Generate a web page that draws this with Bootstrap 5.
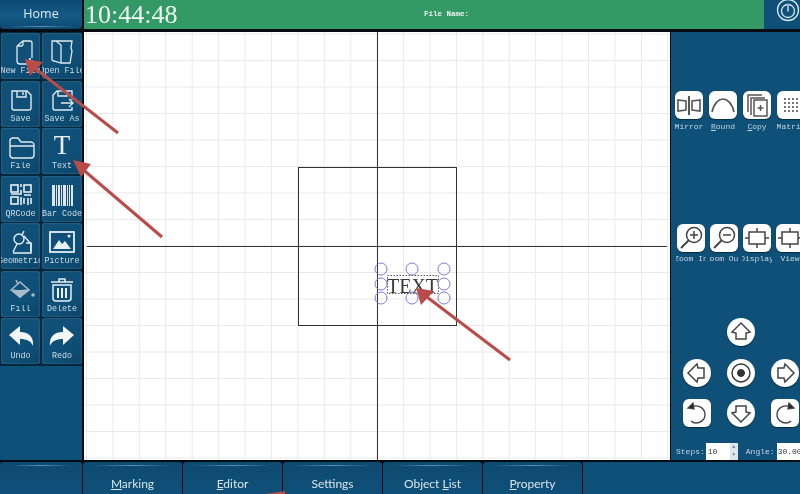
<!DOCTYPE html>
<html lang="en">
<head>
<meta charset="utf-8">
<title>Laser marking editor</title>
<link href="https://cdn.jsdelivr.net/npm/bootstrap@5.3.0/dist/css/bootstrap.min.css" rel="stylesheet">
<style>
html,body{width:800px;height:494px;overflow:hidden;background:#000;margin:0}
.shell{position:relative;width:800px;height:494px;background:#020c12;filter:blur(.35px)}
.toprow{height:29px;margin-bottom:3px}
.homebtn{width:82px;margin-right:2px;border-radius:0 0 4px 4px;background:linear-gradient(#0c4a72,#135a86 55%,#0d4a70);--bs-btn-color:#dfeaf0;--bs-btn-hover-color:#dfeaf0;--bs-btn-hover-bg:#135a86;--bs-btn-font-size:12.5px;--bs-btn-font-family:"Open Sans",sans-serif;position:relative;padding-bottom:3px}
.homebtn::after{content:"";position:absolute;left:8px;right:8px;bottom:2px;height:1px;background:linear-gradient(90deg,transparent,#5d93b3,transparent)}
.greenbar{width:680px;background:#339966;color:#eef7f2}
.clock{font:26px/28px "Liberation Serif",serif;margin-left:1px;width:93px}
.fname{font:bold 7.5px "Liberation Mono",monospace;margin-left:246px;margin-top:-1px}
.powerbox{width:36px;background:#0f5078;overflow:hidden}
.midrow{height:428px;margin-bottom:2px}
.leftpane{width:82px;margin-right:2px;background:#0f5078}
.toolgrid{display:grid;grid-template-columns:39px 40px;column-gap:2px;row-gap:1.5px;padding:1px 0 2px 1px;background:#06283d}
.toolbtn{height:46px;padding:0;border:0;border-radius:3px;background:linear-gradient(145deg,#114f76,#0f5078 60%,#0c4567);box-shadow:inset 0 0 2px #4a87a8;display:flex;flex-direction:column;align-items:center;justify-content:space-between;overflow:hidden;--bs-btn-hover-bg:#0f5078}
.toolbtn svg{display:block;margin-top:4px;flex:none}
.ttl{font:8.4px/9px "Liberation Mono",monospace;white-space:nowrap;margin-bottom:3px;color:#cfdde6;display:flex;justify-content:center;width:100%;overflow:hidden}
.ttglyph{font:27px/28px "Liberation Serif",serif;color:#e8f0f4;margin-top:3px}
.canvasbox{width:586px;margin-right:1px;position:relative;background-color:#fff;background-image:linear-gradient(#e9e9e9 1px,transparent 1px),linear-gradient(90deg,#e9e9e9 1px,transparent 1px);background-size:26.43px 26.5px;background-position:2px 1.5px;overflow:hidden}
.overlayart{position:absolute;left:0;top:0}
.textnode{font:22px "Liberation Serif",serif;fill:#3a3a3a}
.rightpane{width:129px;background:#0f5078;overflow:hidden}
.iconrow{display:flex}
.r1{margin:59px 0 0 4px;gap:6px}
.r2{margin-top:92px;margin-left:6px;gap:5px}
.icell{flex:none;width:28px;display:flex;flex-direction:column;align-items:center}
.whitebtn{width:28px;height:28px;padding:0;border:0;border-radius:6px;background:#fff;box-shadow:0 1px 1px #062c44;display:block;flex:none;--bs-btn-hover-bg:#fff}
.whitebtn svg{display:block}
.ilabel{font:8px/10px "Liberation Mono",monospace;color:#c4d6e1;margin-top:2px;width:30px;display:flex;justify-content:center;overflow:hidden;white-space:nowrap}
.r1 .ilabel{margin-top:3px}
.dpad{display:grid;grid-template-columns:repeat(3,28px);column-gap:16px;grid-auto-rows:28px;row-gap:12.5px;margin:54px 0 0 12px}
.roundbtn{border-radius:50%}
.steprow{margin:16px 0 0 5px;font:8px "Liberation Mono",monospace;color:#c4d6e1;height:17px}
.spinfake{flex:none;background:#fff;color:#333;font:8px/17px "Liberation Mono",monospace;height:17px;display:flex;justify-content:space-between}
.spin1{width:32px;margin:0 1px 0 1px;padding-left:2px}
.stepgap{margin-left:7px}
.spin2{width:40px;margin-left:2px;padding-left:1px}
.arrows{display:flex;flex-direction:column;width:8px;background:#dfe6ec;color:#6c8aa8;font-size:5px;line-height:8px;text-align:center}
.tabrow{height:32px;gap:1px}
.tabcell{width:99px;height:32px;background:linear-gradient(#0d4a70,#0f5078);--bs-btn-color:#d8e5ec;--bs-btn-hover-color:#d8e5ec;--bs-btn-font-size:12px;--bs-btn-font-family:Lato,sans-serif;border-radius:3px 3px 0 0;position:relative;padding:12px 0 0;text-align:center;border:0;--bs-btn-hover-bg:#0f5078}
.tabcell::before{content:"";position:absolute;left:10px;right:10px;top:3px;height:1px;background:linear-gradient(90deg,transparent,#5d93b3,transparent)}
.tabfirst{width:82px}
.tabrest{flex:1;border-radius:0;background:#0f5078}
.tabrest::before{display:none}
.markup{position:absolute;left:0;top:0;pointer-events:none}
</style>
</head>
<body>
<div class="shell">
  <div class="toprow d-flex">
    <button class="homebtn btn border-0 p-0">Home</button>
    <div class="greenbar d-flex align-items-center">
      <div class="clock">10:44:48</div>
      <div class="fname">File Name:</div>
    </div>
    <div class="powerbox">
      <svg width="36" height="29" viewBox="0 0 36 29" fill="none" stroke="#d5e6ef"><circle cx="24" cy="10" r="10.5" stroke-width="1.3"/><circle cx="24" cy="11" r="6.5" stroke-width="1.3"/><path d="M24 3v9" stroke-width="2" stroke="#0f5078"/><path d="M24 3.5v8" stroke-width="1.4"/></svg>
    </div>
  </div>

  <div class="midrow d-flex">
    <div class="leftpane">
      <div class="toolgrid">
        <button class="toolbtn btn"><svg width="30" height="30" viewBox="0 0 30 30" fill="none" stroke="#dfeaf0" stroke-width="1.3"><path d="M11 9l6-5h7c1 0 2 1 2 2v15M11 9v15c0 2 1 3 3 3h7M11 9h4c1 0 2-1 2-2V4"/><path d="M24 21v6M21 24h6" stroke="#fff" stroke-width="1.6"/></svg><span class="ttl">New File</span></button>
        <button class="toolbtn btn"><svg width="30" height="30" viewBox="0 0 30 30" fill="none" stroke="#dfeaf0" stroke-width="1.3"><path d="M5 4h20l-1 7 1 3-2 12h-9l-7-2c-1 0-2-1-2-2z"/><path d="M9 4l5 4v18"/></svg><span class="ttl">Open File</span></button>
        <button class="toolbtn btn"><svg width="30" height="30" viewBox="0 0 30 30" fill="none" stroke="#dfeaf0" stroke-width="1.4"><path d="M6 6h15l4 4v13c0 1-1 2-2 2H8c-1 0-2-1-2-2z"/><path d="M11 6v6h9V6M17 7v3"/></svg><span class="ttl">Save</span></button>
        <button class="toolbtn btn"><svg width="30" height="30" viewBox="0 0 30 30" fill="none" stroke="#dfeaf0" stroke-width="1.4"><path d="M25 15V6H10L6 10v13c0 1 1 2 2 2h17v-3"/><path d="M11 6v5h9V6M14 18h12M22 14l4 4-4 4"/></svg><span class="ttl">Save As</span></button>
        <button class="toolbtn btn"><svg width="30" height="30" viewBox="0 0 30 30" fill="none" stroke="#dfeaf0" stroke-width="1.4"><path d="M4 9c0-2 1-3 3-3h5l3 4h10c1 0 3 1 3 3v10c0 2-1 3-3 3H7c-2 0-3-1-3-3z"/><path d="M4 14h24"/></svg><span class="ttl">File</span></button>
        <button class="toolbtn btn"><span class="ttglyph">T</span><span class="ttl">Text</span></button>
        <button class="toolbtn btn"><svg width="30" height="30" viewBox="0 0 30 30" fill="none" stroke="#e6eff4" stroke-width="1.6"><rect x="5" y="5" width="7" height="7"/><rect x="18" y="5" width="7" height="7"/><rect x="5" y="17" width="7" height="7"/><path d="M15 4v3M15 10v4H5M18 15h7M18 18v6M22 18v7M25 18v6M15 17v8"/></svg><span class="ttl">QRCode</span></button>
        <button class="toolbtn btn"><svg width="30" height="30" viewBox="0 0 30 30" fill="#e0e7ec"><path d="M5 5h3v21H5zM9 5h1v21H9zM11 5h2v21h-2zM14 5h1v21h-1zM16 5h3v21h-3zM20 5h1v21h-1zM22 5h1v21h-1zM24 5h2v21h-2z"/></svg><span class="ttl">Bar Code</span></button>
        <button class="toolbtn btn"><svg width="30" height="30" viewBox="0 0 30 30" fill="none" stroke="#e6eff4" stroke-width="1.4"><circle cx="13" cy="12" r="5"/><path d="M7 25l4-8M16 8l2-4M18 9l7 8v9H7"/><path d="M20 16h5v9"/></svg><span class="ttl">Geometric</span></button>
        <button class="toolbtn btn"><svg width="30" height="30" viewBox="0 0 30 30" fill="none" stroke="#e6eff4" stroke-width="1.5"><rect x="3" y="5" width="24" height="20" stroke-width="1.8"/><path d="M6 22l6-9 3 4 3-3 6 8z" fill="#e6eff4" stroke="none"/><circle cx="22" cy="9" r="1.5" fill="#e6eff4" stroke="none"/></svg><span class="ttl">Picture</span></button>
        <button class="toolbtn btn"><svg width="30" height="30" viewBox="0 0 30 30" fill="none" stroke="#a9bcc8" stroke-width="1.5"><path d="M5 15l9-8 9 8-9 7z"/><path d="M7 15c5 2 10 0 15 0l-8 7z" fill="#a9bcc8"/><path d="M12 9l-2-4"/><circle cx="27" cy="20" r="1.8" fill="#a9bcc8" stroke="none"/></svg><span class="ttl">Fill</span></button>
        <button class="toolbtn btn"><svg width="30" height="30" viewBox="0 0 30 30" fill="none" stroke="#e6eff4" stroke-width="1.5"><path d="M4 7h22M12 7V4h6v3M6 10h18v13c0 2-1 3-3 3H9c-2 0-3-1-3-3z"/><path d="M11 13v10M15 13v10M19 13v10" stroke-width="2"/></svg><span class="ttl">Delete</span></button>
        <button class="toolbtn btn"><svg width="30" height="30" viewBox="0 0 30 30" fill="#f2f6f8"><path d="M3 13L14 4v6c8 0 14 4 13 14-2-5-6-7-13-7v6z"/></svg><span class="ttl">Undo</span></button>
        <button class="toolbtn btn"><svg width="30" height="30" viewBox="0 0 30 30" fill="#f2f6f8"><path d="M27 13L16 4v6C8 10 2 14 3 24c2-5 6-7 13-7v6z"/></svg><span class="ttl">Redo</span></button>
      </div>
    </div>

    <div class="canvasbox">
      <svg class="overlayart" width="586" height="428" viewBox="84 32 586 428" fill="none">
        <path d="M377.5 32v428M87 246.5h580" stroke="#333"/>
        <rect x="298.5" y="167.5" width="158" height="158" stroke="#333"/>
        <rect x="387.5" y="275.5" width="51" height="18" stroke="#555" stroke-dasharray="1.5 1.5"/>
        <text class="textnode" x="387" y="292.5" textLength="51" lengthAdjust="spacingAndGlyphs">TEXT</text>
        <g stroke="#7c7ce0">
          <circle cx="381" cy="269" r="6"/><circle cx="412" cy="269" r="6"/><circle cx="444" cy="269" r="6"/>
          <circle cx="381" cy="284" r="6"/><circle cx="444" cy="284" r="6"/>
          <circle cx="381" cy="298" r="6"/><circle cx="412" cy="298" r="6"/><circle cx="444" cy="298" r="6"/>
        </g>
      </svg>
    </div>

    <div class="rightpane">
      <div class="iconrow r1">
        <div class="icell"><button class="whitebtn btn"><svg width="28" height="28" viewBox="0 0 28 28" fill="none" stroke="#555" stroke-width="1.6"><path d="M3 9l8 1v9l-8 1zM25 9l-8 1v9l8 1z"/><path d="M14 5v19" stroke-width="2"/></svg></button><span class="ilabel">Mirror</span></div>
        <div class="icell"><button class="whitebtn btn"><svg width="28" height="28" viewBox="0 0 28 28" fill="none" stroke="#555" stroke-width="1.6"><path d="M3 21C5 12 10 8 14 8s9 4 11 13"/></svg></button><span class="ilabel"><u>R</u>ound</span></div>
        <div class="icell"><button class="whitebtn btn"><svg width="28" height="28" viewBox="0 0 28 28" fill="none" stroke="#555" stroke-width="1.5"><path d="M5 21V4h14"/><path d="M8 24V7h14"/><rect x="11" y="9" width="13" height="16"/><path d="M17.5 14v6M14.5 17h6"/></svg></button><span class="ilabel"><u>C</u>opy</span></div>
        <div class="icell"><button class="whitebtn btn"><svg width="28" height="28" viewBox="0 0 28 28" fill="#777"><path d="M7 7h2v2H7zM11 7h2v2h-2zM15 7h2v2h-2zM19 7h2v2h-2zM7 11h2v2H7zM11 11h2v2h-2zM15 11h2v2h-2zM19 11h2v2h-2zM7 15h2v2H7zM11 15h2v2h-2zM15 15h2v2h-2zM19 15h2v2h-2zM7 19h2v2H7zM11 19h2v2h-2zM15 19h2v2h-2zM19 19h2v2h-2z"/></svg></button><span class="ilabel">Matrix</span></div>
      </div>
      <div class="iconrow r2">
        <div class="icell"><button class="whitebtn btn"><svg width="28" height="28" viewBox="0 0 28 28" fill="none" stroke="#444" stroke-width="1.5"><circle cx="17" cy="11" r="7.5"/><path d="M17 7v8M13 11h8"/><path d="M11.5 16.5L4 24" stroke-width="2"/></svg></button><span class="ilabel">Zoom In</span></div>
        <div class="icell"><button class="whitebtn btn"><svg width="28" height="28" viewBox="0 0 28 28" fill="none" stroke="#444" stroke-width="1.5"><circle cx="17" cy="11" r="7.5"/><path d="M13 11h8"/><path d="M11.5 16.5L4 24" stroke-width="2"/></svg></button><span class="ilabel">Zoom Out</span></div>
        <div class="icell"><button class="whitebtn btn"><svg width="28" height="28" viewBox="0 0 28 28" fill="none" stroke="#444" stroke-width="1.5"><rect x="6" y="8" width="16" height="12"/><path d="M14 4v4M14 20v4M2 14h4M22 14h4"/></svg></button><span class="ilabel">Display</span></div>
        <div class="icell"><button class="whitebtn btn"><svg width="28" height="28" viewBox="0 0 28 28" fill="none" stroke="#444" stroke-width="1.5"><rect x="6" y="8" width="16" height="12"/><path d="M14 4v4M14 20v4M2 14h4M22 14h4"/></svg></button><span class="ilabel">View</span></div>
      </div>
      <div class="dpad">
        <span></span>
        <button class="whitebtn roundbtn btn"><svg width="28" height="28" viewBox="0 0 28 28" fill="none" stroke="#444" stroke-width="1.5"><path d="M14 5l9 9-4 1v6H9v-6l-4-1z"/></svg></button>
        <span></span>
        <button class="whitebtn roundbtn btn"><svg width="28" height="28" viewBox="0 0 28 28" fill="none" stroke="#444" stroke-width="1.5"><path d="M5 14l9-9 1 4h6v10h-6l-1 4z"/></svg></button>
        <button class="whitebtn roundbtn btn"><svg width="28" height="28" viewBox="0 0 28 28" fill="#333" stroke="#333"><circle cx="14" cy="14" r="9" fill="none" stroke-width="1.4"/><circle cx="14" cy="14" r="3.5"/></svg></button>
        <button class="whitebtn roundbtn btn"><svg width="28" height="28" viewBox="0 0 28 28" fill="none" stroke="#444" stroke-width="1.5"><path d="M23 14l-9-9-1 4H7v10h6l1 4z"/></svg></button>
        <button class="whitebtn btn"><svg width="28" height="28" viewBox="0 0 28 28" fill="none" stroke="#444" stroke-width="1.3"><path d="M11 7c6-1 11 3 11 9 0 5-5 8-9 8-2 0-4-1-5-2"/><path d="M5 9l5-5 1 6z" fill="#222"/></svg></button>
        <button class="whitebtn roundbtn btn"><svg width="28" height="28" viewBox="0 0 28 28" fill="none" stroke="#444" stroke-width="1.5"><path d="M14 23l-9-9 4-1V7h10v6l4 1z"/></svg></button>
        <button class="whitebtn btn"><svg width="28" height="28" viewBox="0 0 28 28" fill="none" stroke="#444" stroke-width="1.3"><path d="M17 7c-6-1-11 3-11 9 0 5 5 8 9 8 2 0 4-1 5-2"/><path d="M23 9l-5-5-1 6z" fill="#222"/></svg></button>
      </div>
      <div class="steprow d-flex align-items-center">
        <span>Steps:</span>
        <div class="spinfake spin1"><span>10</span><span class="arrows"><span>▲</span><span>▼</span></span></div>
        <span class="stepgap">Angle:</span>
        <div class="spinfake spin2"><span>30.00</span></div>
      </div>
    </div>
  </div>

  <div class="tabrow d-flex">
    <div class="tabcell tabfirst"></div>
    <button class="tabcell btn"><u>M</u>arking</button>
    <button class="tabcell btn"><u>E</u>ditor</button>
    <button class="tabcell btn">Settings</button>
    <button class="tabcell btn">Object <u>L</u>ist</button>
    <button class="tabcell btn"><u>P</u>roperty</button>
    <div class="tabcell tabrest"></div>
  </div>

  <svg class="markup" width="800" height="494" viewBox="0 0 800 494" fill="#b94b49" stroke="#b94b49">
    <path d="M118 133L32 66" stroke-width="3" fill="none"/><path d="M25 59l18 3-13 14z" stroke="none"/>
    <path d="M162 237L80 167" stroke-width="3" fill="none"/><path d="M73 160l18 4-10 13z" stroke="none"/>
    <path d="M510 360L423 294" stroke-width="3" fill="none"/><path d="M416 288l18 3-13 14z" stroke="none"/>
    <path d="M265 494l20-3v3z" stroke="none"/>
  </svg>
</div>
</body>
</html>
